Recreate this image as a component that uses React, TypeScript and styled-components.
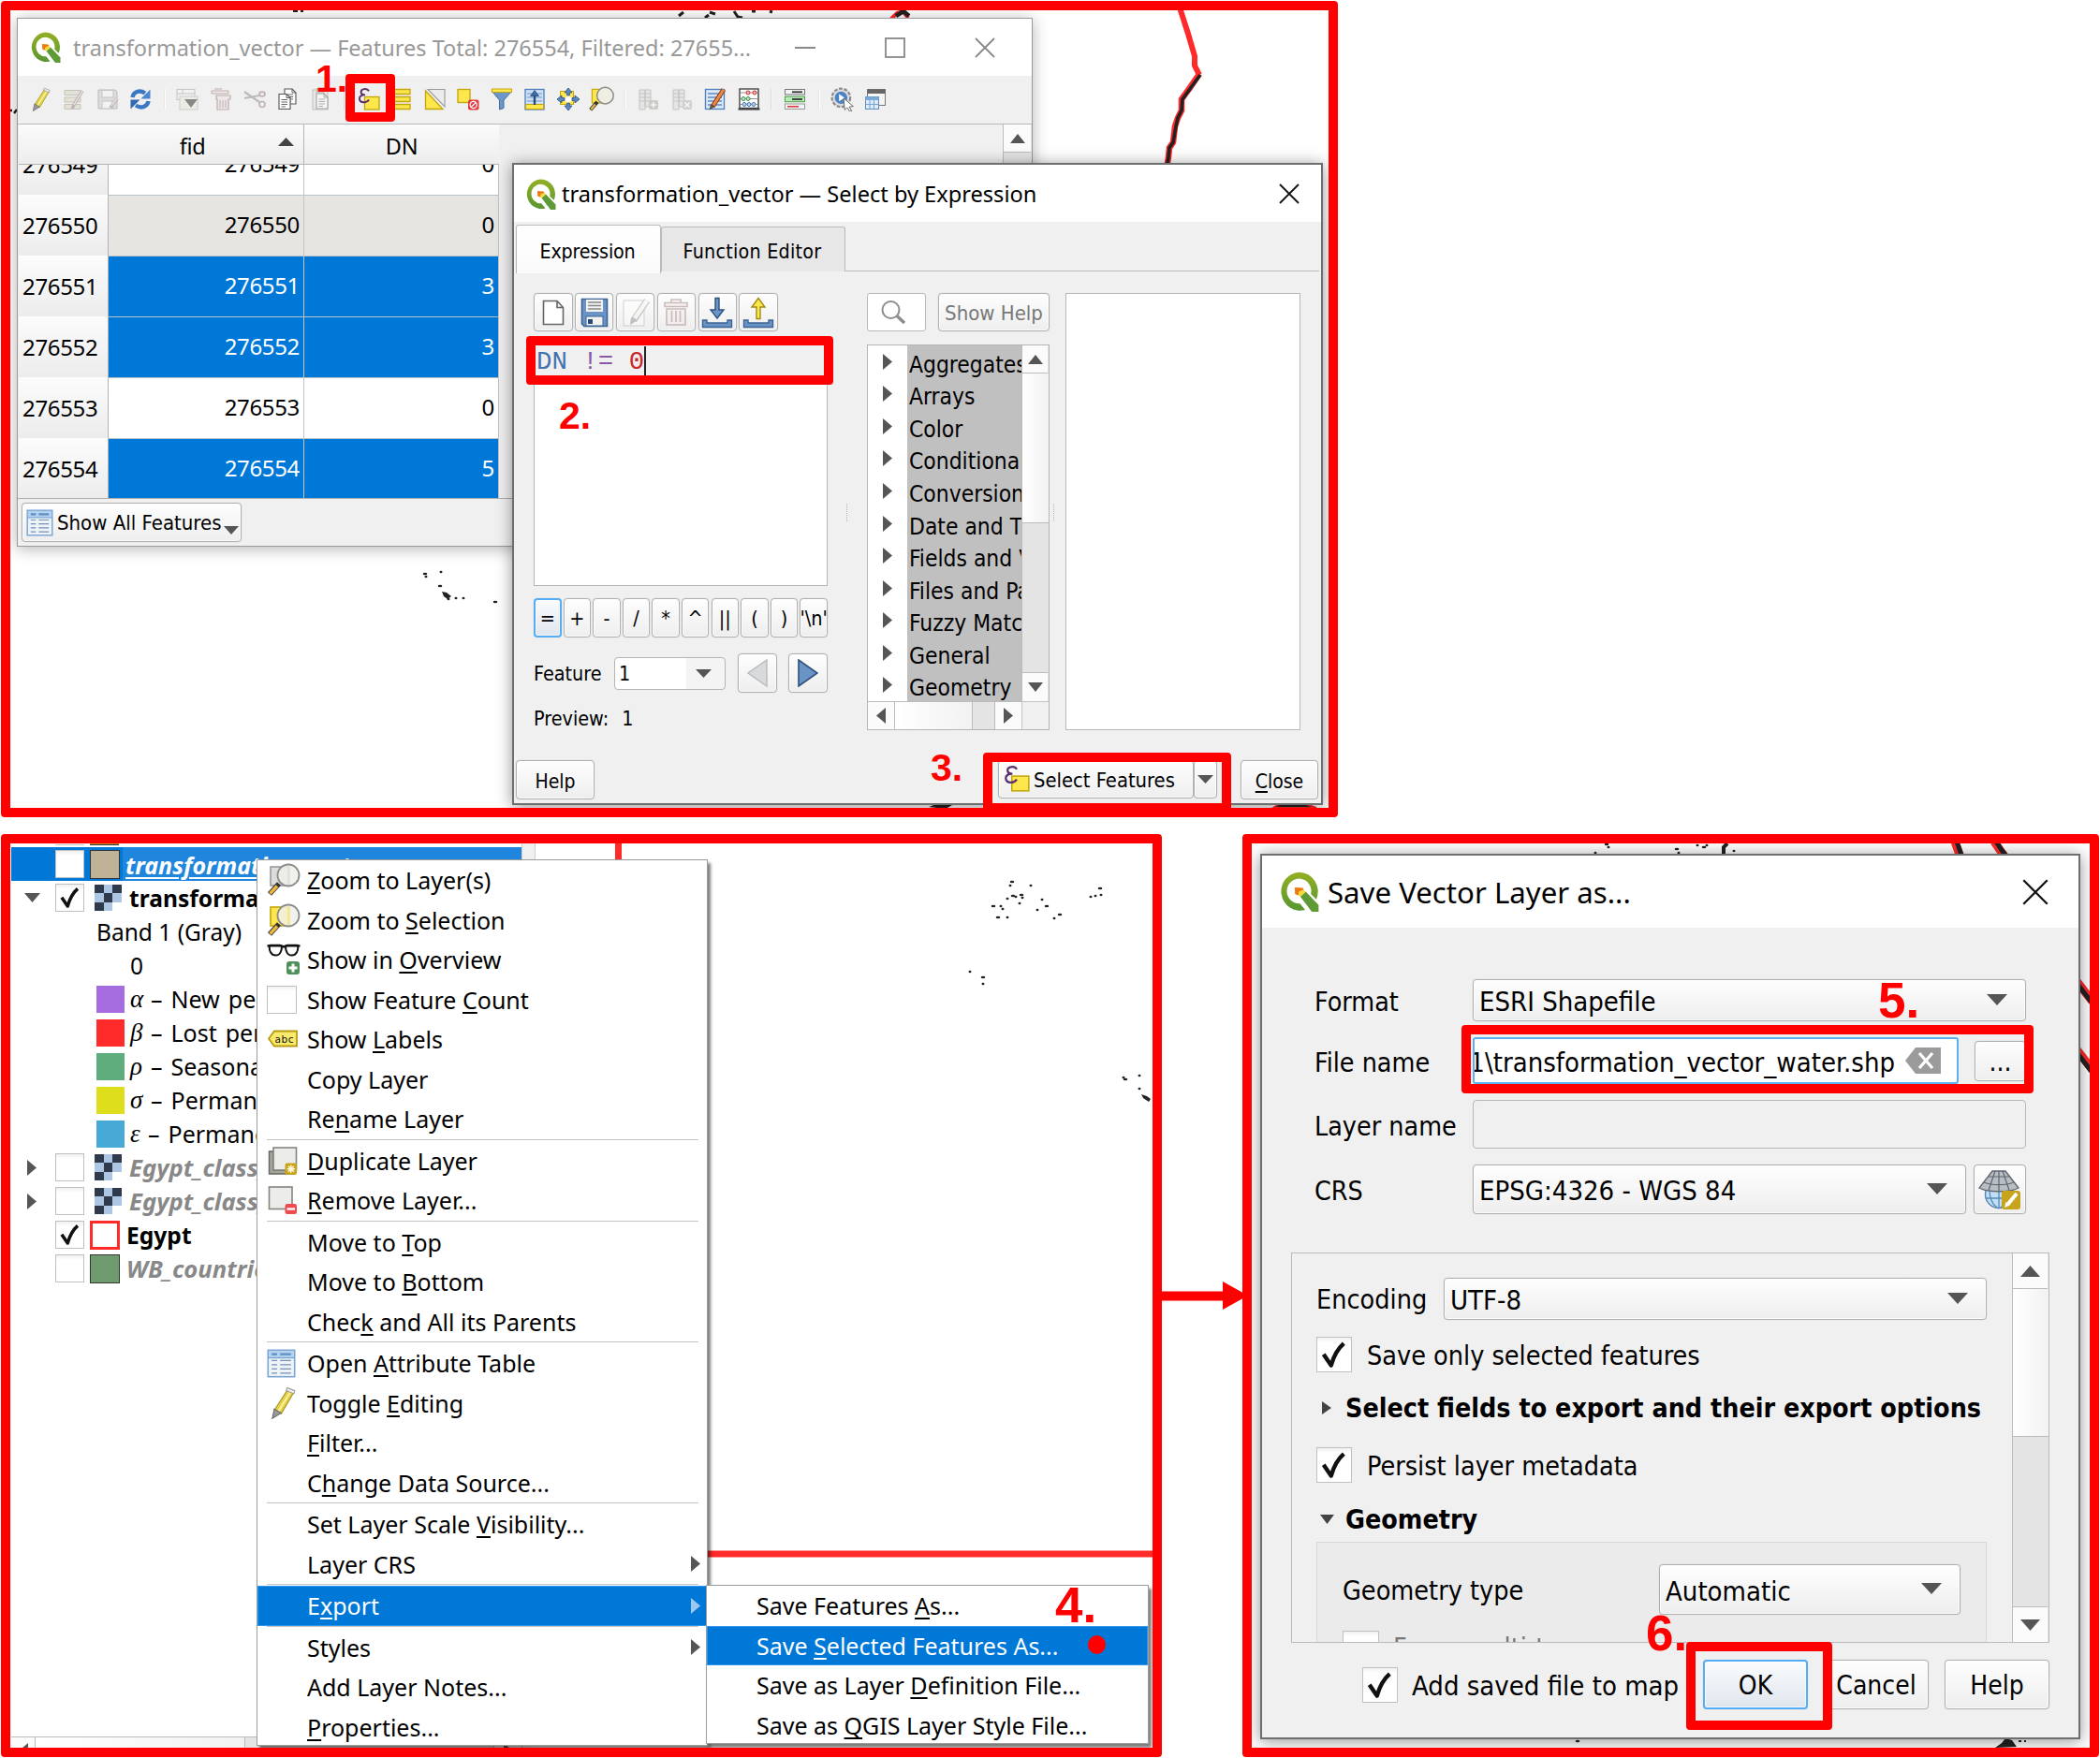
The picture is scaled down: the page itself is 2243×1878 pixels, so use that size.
import React from 'react';
import styled, { createGlobalStyle, css } from 'styled-components';

const RED = '#ff0000';
const UI = '"Noto Sans", "Open Sans", sans-serif';
const TAHOMA = '"DejaVu Sans Condensed", "DejaVu Sans", sans-serif';

const GlobalStyle = createGlobalStyle`
  * { box-sizing: border-box; }
  body { margin: 0; background: #fff; color: #000; font-family: ${UI}; }
  svg { display: block; flex: none; }
`;

/* ---------- page ---------- */

const Page = styled.main`
  width: 2243px;
  height: 1878px;
  padding: 1px;
  display: flex;
  flex-direction: column;
  gap: 18px;
  overflow: hidden;
`;

const LowerRow = styled.div`
  display: flex;
  align-items: stretch;
`;

const Panel = styled.section<{ $w: number; $h: number }>`
  position: relative;
  flex: none;
  width: ${(p) => p.$w}px;
  height: ${(p) => p.$h}px;
  border: 10px solid ${RED};
  border-radius: 4px;
  background: #fff;
`;

const Scene = styled.div`
  position: absolute;
  inset: 0;
  overflow: hidden;
`;

const MapSvg = styled.svg`
  position: absolute;
  inset: 0;
  width: 100%;
  height: 100%;
`;

const Connector = styled.div`
  width: 86px;
  padding-top: 478px;
  position: relative;
  z-index: 2;
  svg { overflow: visible; }
`;

const CalloutBox = styled.div<{ $x: number; $y: number; $w: number; $h: number }>`
  position: absolute;
  left: ${(p) => p.$x}px;
  top: ${(p) => p.$y}px;
  width: ${(p) => p.$w}px;
  height: ${(p) => p.$h}px;
  border: 10px solid ${RED};
  border-radius: 4px;
`;

const StepNumber = styled.span<{ $x: number; $y: number; $size: number }>`
  position: absolute;
  left: ${(p) => p.$x}px;
  top: ${(p) => p.$y}px;
  font: bold ${(p) => p.$size}px/1 "Liberation Sans", Arial, sans-serif;
  color: ${RED};
`;

const StepDot = styled.span`
  position: absolute;
  left: 1151px;
  top: 846px;
  width: 19px;
  height: 20px;
  border-radius: 50%;
  background: ${RED};
`;

/* ---------- window chrome ---------- */

const Window = styled.div<{ $x: number; $y: number; $w: number; $h: number; $active?: boolean }>`
  position: absolute;
  left: ${(p) => p.$x}px;
  top: ${(p) => p.$y}px;
  width: ${(p) => p.$w}px;
  height: ${(p) => p.$h}px;
  display: flex;
  flex-direction: column;
  background: #f0f0f0;
  border: ${(p) => (p.$active ? '2px solid #6c6e70' : '1px solid #9a9a9a')};
  box-shadow: 0 2px 16px rgba(0, 0, 0, ${(p) => (p.$active ? 0.42 : 0.3)});
`;

const TitleBar = styled.header<{ $h: number; $size: number; $pad: string; $gap: number; $muted?: boolean }>`
  flex: none;
  height: ${(p) => p.$h}px;
  padding: ${(p) => p.$pad};
  display: flex;
  align-items: center;
  gap: ${(p) => p.$gap}px;
  background: #fff;
  font-size: ${(p) => p.$size}px;
  white-space: nowrap;
  color: ${(p) => (p.$muted ? '#999' : '#000')};
`;

const WindowControls = styled.div<{ $gap: number }>`
  margin-left: auto;
  display: flex;
  align-items: center;
  gap: ${(p) => p.$gap}px;
`;

const raised = css`
  border: 1px solid #b0b0b0;
  border-radius: 4px;
  background: linear-gradient(#fefefe, #eeeeee);
  box-shadow: inset 0 0 0 1px rgba(255, 255, 255, 0.7), 0 0 1px #bbb;
`;

const Button = styled.button<{ $w: number; $h: number; $size?: number; $focus?: boolean; $muted?: boolean; $drop?: number }>`
  ${raised}
  flex: none;
  width: ${(p) => p.$w}px;
  height: ${(p) => p.$h}px;
  padding: ${(p) => p.$drop ?? 0}px 0 0;
  display: flex;
  align-items: center;
  justify-content: center;
  font: ${(p) => p.$size ?? 21}px ${TAHOMA};
  white-space: nowrap;
  color: ${(p) => (p.$muted ? '#787878' : '#000')};
  ${(p) => p.$focus && css`
    border: 2px solid #55aef5;
    background: linear-gradient(#fafcfe, #e0e6ed);
  `}
`;

const ScrollButton = styled.div<{ $w: number; $h: number; $edge?: string }>`
  flex: none;
  width: ${(p) => p.$w}px;
  height: ${(p) => p.$h}px;
  display: flex;
  align-items: center;
  justify-content: center;
  background: #fbfbfb;
  border: 0 solid #bcbcbc;
  ${(p) => p.$edge && `border-${p.$edge}-width: 1px;`}
`;

const ScrollThumb = styled.div<{ $w: number; $h: number; $edge: string }>`
  flex: none;
  width: ${(p) => p.$w}px;
  height: ${(p) => p.$h}px;
  background: linear-gradient(90deg, #fff, #f2f2f2);
  border: 0 solid #bcbcbc;
  border-${(p) => p.$edge}-width: 1px;
`;

const CheckBoxFrame = styled.span<{ $w: number; $h: number }>`
  flex: none;
  width: ${(p) => p.$w}px;
  height: ${(p) => p.$h}px;
  display: flex;
  align-items: center;
  justify-content: center;
  border: 1.5px solid #c0c0c0;
  background: linear-gradient(#f0f0f0, #fff 5px);
`;

/* ---------- small drawings ---------- */

type Dir = 'up' | 'down' | 'left' | 'right';
const triPoints: Record<Dir, string> = {
  up: '0,10 5,0 10,10',
  down: '0,0 10,0 5,10',
  left: '10,0 10,10 0,5',
  right: '0,0 10,5 0,10',
};
const Triangle = ({ dir, w, h, fill = '#555' }: { dir: Dir; w: number; h: number; fill?: string }) => (
  <svg width={w} height={h} viewBox="0 0 10 10" preserveAspectRatio="none">
    <polygon points={triPoints[dir]} fill={fill} />
  </svg>
);

const Tick = ({ size }: { size: number }) => (
  <svg width={size} height={size} viewBox="0 0 24 24" fill="none" stroke="#111">
    <path d="M3 12 L9.5 21.5 Q13 9 20.5 2.5" strokeWidth="3.6" strokeLinejoin="round" />
  </svg>
);

const CheckBox = ({ checked, w = 31, h = 30 }: { checked?: boolean; w?: number; h?: number }) => (
  <CheckBoxFrame $w={w} $h={h}>{checked && <Tick size={h * 0.78} />}</CheckBoxFrame>
);

const CloseGlyph = ({ size, color }: { size: number; color: string }) => (
  <svg width={size} height={size} viewBox="0 0 22 22" stroke={color} strokeWidth="1.8">
    <path d="M1 1 L21 21 M21 1 L1 21" />
  </svg>
);

const QgisLogo = ({ size }: { size: number }) => (
  <svg width={size} height={size} viewBox="0 0 33 33">
    <defs>
      <linearGradient id="qring" x1="0" y1="0" x2="0" y2="1">
        <stop offset="0" stopColor="#93b023" />
        <stop offset="1" stopColor="#589632" />
      </linearGradient>
    </defs>
    <path
      d="M16.5 0.5 A15.5 15.8 0 1 0 21.5 31.5 L17.3 26.2 A10 10.2 0 1 1 26.2 18.5 L30.6 22.8 A15.8 15.8 0 0 0 16.5 0.5 Z"
      fill="url(#qring)"
    />
    <polygon points="17.5,20.5 22,16.5 32.5,27.5 32.5,33 27,33" fill="#5e9a35" />
    <polygon points="15.2,15.5 19.2,15.5 22,16.5 17.5,20.5 15.2,19" fill="#f3dd3c" />
    <polygon points="13,13 19.5,13.4 20.5,15.2 15.6,19.6 13.2,18.5" fill="#ee7913" />
    <polygon points="16.5,16.4 20,15 22,16.6 17.6,20.5 15.8,18.5" fill="#f4d93c" />
  </svg>
);

const Ic = ({ children, faded, size = 24 }: { children: React.ReactNode; faded?: boolean; size?: number }) => (
  <svg width={size} height={size} viewBox="0 0 24 24" fill="none" opacity={faded ? 0.5 : 1}>
    {children}
  </svg>
);

const Pencil = ({ size = 26 }: { size?: number }) => (
  <Ic size={size}>
    <polygon points="15.5,2 20,4 10.5,20 5.5,17.5" fill="#e5d34b" stroke="#a79626" strokeWidth=".8" />
    <path d="M17.7 3.5 L8 19" stroke="#fbf3a0" strokeWidth="1.3" />
    <polygon points="15,1 20.5,3.2 19.8,5.4 14.2,3" fill="#eee" stroke="#999" strokeWidth=".7" />
    <polygon points="5.5,16.5 10.4,19.6 4,23.5" fill="#999" stroke="#666" strokeWidth=".7" />
  </Ic>
);

const TableIcon = ({ size }: { size: number }) => (
  <Ic size={size}>
    <rect x="1" y="1" width="22" height="22" fill="#eef3f8" stroke="#7ba4d4" strokeWidth="1.2" />
    <rect x="1.6" y="1.6" width="20.8" height="5.6" fill="#b3d2ee" />
    <path d="M1 7.4H23" stroke="#7ba4d4" />
    <path d="M4 4.4H8.5 M11 4.4H20" stroke="#5e8ec4" strokeWidth="1.8" />
    <path d="M4 9.5H8.5M11 9.5H20M4 13H8.5M11 13H20M4 16.5H8.5M11 16.5H20M4 20H8.5M11 20H20" stroke="#7590b8" />
  </Ic>
);

const EpsilonIcon = ({ size }: { size: number }) => (
  <Ic size={size}>
    <rect x="7.5" y="9.5" width="15.5" height="13.5" fill="#fde74c" stroke="#c4a50a" strokeWidth="1.3" />
    <path
      d="M12 3.2 C10 -.2 3.4 .6 3.6 4.4 C3.7 6.8 6 7.4 8 7.4 C4 7.4 1.6 9 2 12 C2.6 16.2 9.6 16.4 12 12.6"
      stroke="#5b2d6b"
      strokeWidth="1.9"
    />
  </Ic>
);

const ZoomIcon = ({ fill, edge }: { fill: string; edge: string }) => (
  <svg width="36" height="36" viewBox="0 0 36 36" fill="none">
    <rect x="4" y="4" width="20" height="20" fill={fill} stroke={edge} strokeWidth="1.6" />
    <path d="M3 33 L13 22" stroke="#333" strokeWidth="5.5" />
    <path d="M3.5 32.5 L11 24.5" stroke="#eeb842" strokeWidth="3.4" />
    <circle cx="23" cy="13" r="11.5" fill="#f0f0ea" fillOpacity=".85" stroke="#8b8b8b" strokeWidth="1.8" />
    <path d="M23 4v18" stroke={fill} strokeWidth="2" opacity=".7" />
  </svg>
);

const Magnifier = () => (
  <svg width="27" height="27" viewBox="0 0 27 27" fill="none" stroke="#8d8d8d">
    <circle cx="10.5" cy="11" r="9" strokeWidth="2" />
    <path d="M17 17.5 L25 25" strokeWidth="3.4" />
  </svg>
);

/* ---------- attribute table window ---------- */

const Toolbar = styled.div`
  flex: none;
  height: 52px;
  padding: 0 0 2px 7px;
  display: flex;
  align-items: center;
  border-bottom: 1px solid #b9b9b9;
`;

const ToolSlot = styled.span`
  width: 35.55px;
  display: flex;
  align-items: center;
  justify-content: center;
`;

const ToolSeparator = styled.i<{ $w: number }>`
  width: ${(p) => p.$w}px;
  height: 22px;
  background: linear-gradient(90deg, transparent calc(50% - 1px), #d2d2d2 calc(50% - 1px), #fff calc(50% + 1px), transparent calc(50% + 1px));
`;

const TableArea = styled.div`
  flex: none;
  height: 400px;
  padding-left: 1px;
  display: flex;
  border-bottom: 1px solid #b0b0b0;
  overflow: hidden;
`;

const Grid = styled.div`
  width: 513px;
  display: flex;
  flex-direction: column;
  overflow: hidden;
  font-size: 24px;
  letter-spacing: -0.35px;
`;

const GridHeader = styled.div`
  flex: none;
  height: 43px;
  display: flex;
  position: relative;
  z-index: 1;
  background: linear-gradient(#fbfbfb, #f0f0f0 80%, #ececec);
  border-bottom: 1.5px solid #b5b5b5;
  font-size: 23.5px;
`;

const ColumnTitle = styled.div<{ $w: number; $pad?: number; $divider?: boolean }>`
  width: ${(p) => p.$w}px;
  padding: 4px 10px 0 ${(p) => p.$pad ?? 10}px;
  display: flex;
  align-items: center;
  justify-content: center;
  border-right: ${(p) => (p.$divider ? '1px solid #b5b5b5' : '0')};
`;

const SortMark = styled.span`
  position: absolute;
  left: 277px;
  top: 14px;
`;

const GridRows = styled.div`
  margin-top: -33px;
`;

const GridRow = styled.div<{ $bg: string; $fg: string }>`
  height: 65px;
  display: grid;
  grid-template-columns: 96px 209px 208px;
  line-height: 64px;
  background: ${(p) => p.$bg};
  color: ${(p) => p.$fg};
`;

const RowHead = styled.div`
  padding: 1px 0 0 4px;
  color: #000;
  background: linear-gradient(#fcfcfc, #ececec);
  border-right: 1px solid #b5b5b5;
  border-bottom: 1px solid #b5b5b5;
`;

const Cell = styled.div`
  padding-right: 4px;
  text-align: right;
  border-right: 1px solid #c4c4c4;
  border-bottom: 1px solid #b9c3ca;
`;

const TableScroll = styled.div`
  width: 31px;
  margin-left: auto;
  display: flex;
  flex-direction: column;
  border-left: 1px solid #bcbcbc;
  background: #e4e4e4;
`;

const BottomBar = styled.div`
  flex: 1;
  padding: 4px 0 0 4px;
`;

const FilterButton = styled.button`
  ${raised}
  width: 235px;
  height: 42px;
  padding: 0 3px 0 4px;
  display: flex;
  align-items: center;
  gap: 4px;
  font: 22px ${TAHOMA};
  white-space: nowrap;
  svg:last-child { margin: 17px 0 0 -1px; }
`;

const Save = () => (
  <>
    <path d="M2 2H20L22 4V22H2Z" fill="#c9ccd0" stroke="#888" />
    <rect x="6" y="2.5" width="12" height="7.5" fill="#f4f4f4" stroke="#999" />
    <rect x="6" y="14" width="11" height="8" fill="#f4f4f4" stroke="#999" />
  </>
);
const Sheet = ({ x, y }: { x: number; y: number }) => (
  <g transform={`translate(${x} ${y})`}>
    <path d="M0 0H8L12 4V16H0Z" fill="#fff" stroke="#555" strokeWidth="1.1" />
    <path d="M8 0V4H12M2.5 6H9M2.5 8.5H9M2.5 11H9M2.5 13.5H7" stroke="#555" strokeWidth=".9" />
  </g>
);

const tools: (React.ReactNode | number)[] = [
  <Pencil key="edit" />,
  <Ic key="multi" faded>
    <path d="M2 2.5H19V7.5H2ZM2 10H19V15H2ZM2 17.5H19V22.5H2Z" fill="#d5d5c4" stroke="#9a9a80" />
    <path d="M21 3 L12 18 L10 22" stroke="#8d7777" strokeWidth="3.4" />
    <path d="M21 3 L12 18" stroke="#e8dada" strokeWidth="1.4" />
  </Ic>,
  <Ic key="save" faded><Save /><path d="M22 11 L15 21" stroke="#9a7b7b" strokeWidth="3.4" /><path d="M22 11 L16 19" stroke="#e6d6d6" strokeWidth="1.4" /></Ic>,
  <Ic key="reload">
    <path d="M3.5 10 C4.5 4 11 1.5 17 5.5" stroke="#3b78c4" strokeWidth="4.4" />
    <path d="M22.5 1.5V11.5H12.5Z" fill="#4a86cf" />
    <path d="M20.5 14 C19.5 20 13 22.5 7 18.5" stroke="#3b78c4" strokeWidth="4.4" />
    <path d="M1.5 22.5V12.5H11.5Z" fill="#3368b0" />
  </Ic>,
  14.5,
  <Ic key="add" faded>
    <rect x="1" y="1.5" width="19" height="11" fill="#f3f3f3" stroke="#999" />
    <path d="M1 6H20M7 1.5V6" stroke="#999" />
    <rect x="4" y="9" width="19" height="14" fill="#eceada" stroke="#aaa" />
    <polygon points="9,12 23,12 16,21" fill="#222" />
  </Ic>,
  <Ic key="trash" faded>
    <path d="M2 3H20V6H2ZM5 1H13" stroke="#8f6a6a" fill="#f0e6e6" />
    <path d="M7 8H22V12H20V23H8V12H7Z" fill="#ecdfdf" stroke="#8f6a6a" strokeWidth="1.2" />
    <path d="M11 13V21M14 13V21M17 13V21" stroke="#8f6a6a" />
  </Ic>,
  <Ic key="cut" faded>
    <path d="M1 4 L17 15 M1 11 L17 8" stroke="#8f8585" strokeWidth="2.2" />
    <ellipse cx="20" cy="6.5" rx="3" ry="2.4" stroke="#8f7575" strokeWidth="1.6" />
    <ellipse cx="20" cy="17.5" rx="3" ry="3" stroke="#8f7575" strokeWidth="1.6" />
  </Ic>,
  <Ic key="copy"><Sheet x={9} y={1} /><Sheet x={3} y={6.5} /></Ic>,
  <Ic key="paste" faded><rect x="3" y="2" width="16" height="21" fill="#e6e2da" stroke="#8d8d8d" /><rect x="7" y="0.8" width="8" height="4" fill="#ccc" stroke="#888" /><Sheet x={7} y={6} /></Ic>,
  15.5,
  <EpsilonIcon key="expr" size={24} />,
  <Ic key="all">
    <path d="M1 1.5H21V6.5H1ZM1 9.5H21V14.5H1ZM1 17.5H21V22.5H1Z" fill="#fde74c" stroke="#c4a50a" strokeWidth="1.3" />
  </Ic>,
  <Ic key="invert">
    <polygon points="4,1.5 22,1.5 22,20" fill="#ececec" stroke="#999" strokeWidth="1.1" />
    <polygon points="1.5,3 20,22.5 1.5,22.5" fill="#fde74c" stroke="#c4a50a" strokeWidth="1.3" />
  </Ic>,
  <Ic key="desel">
    <rect x="1" y="1.5" width="13" height="14" fill="#fde74c" stroke="#c4a50a" strokeWidth="1.3" />
    <rect x="12" y="12.5" width="11.5" height="11" rx="2" fill="#e23b3f" />
    <circle cx="17.7" cy="18" r="3.6" stroke="#fff" strokeWidth="1.2" /><path d="M15 20.5L20.3 15.5" stroke="#fff" strokeWidth="1.2" />
  </Ic>,
  <Ic key="filter">
    <path d="M2 4 L9.5 13 V23 L14 21.5 V13 L22 4Z" fill="#6b97cb" stroke="#44699a" />
    <rect x="1.5" y="1" width="21" height="3.6" fill="#fde74c" stroke="#c4a50a" />
  </Ic>,
  <Ic key="top">
    <rect x="2" y="1.5" width="20" height="21.5" fill="#cfe2f5" stroke="#4e7dbb" strokeWidth="1.3" />
    <path d="M4 6H20M4 10H20M4 14H20" stroke="#6d95c8" />
    <rect x="2.6" y="17.5" width="19" height="5" fill="#fde74c" stroke="#c4a50a" />
    <path d="M12 18V7" stroke="#274a7b" strokeWidth="2.4" /><polygon points="7.5,8.5 16.5,8.5 12,2.5" fill="#3f6ca8" stroke="#274a7b" strokeWidth=".8" />
  </Ic>,
  <Ic key="pan">
    <rect x="3.5" y="3.5" width="14" height="14" fill="#fde74c" stroke="#c4a50a" />
    <path d="M12 4V20M4 12H20" stroke="#fff" strokeWidth="3.5" />
    <path d="M12 0L16 5H13.4V8H10.6V5H8ZM12 24L16 19H13.4V16H10.6V19H8ZM0 12L5 8V10.6H8V13.4H5V16ZM24 12L19 8V10.6H16V13.4H19V16Z" fill="#5b88c4" stroke="#2c4c7c" strokeWidth=".8" />
  </Ic>,
  <Ic key="zoomsel" size={27}>
    <rect x="3" y="3" width="12" height="13" fill="#fde74c" stroke="#c4a50a" />
    <path d="M1.5 22.5 L8 15" stroke="#333" strokeWidth="3.4" /><path d="M2 22 L6 17.3" stroke="#eeb842" strokeWidth="2" />
    <circle cx="15.5" cy="9" r="7.8" fill="#eeeee2" stroke="#8b8b8b" strokeWidth="1.3" />
  </Ic>,
  15,
  <Ic key="newf" faded>
    <path d="M2 2H8V23H2ZM8 2H14V20H8Z" fill="#dcdcdc" stroke="#999" /><path d="M2 6H14M2 10H14M2 14H14" stroke="#999" />
    <rect x="12" y="13" width="10" height="10" rx="2" fill="#a8a8a0" /><path d="M17 15V21M14 18H20" stroke="#fff" strokeWidth="1.5" />
  </Ic>,
  <Ic key="delf" faded>
    <path d="M2 2H8V23H2ZM8 2H14V20H8Z" fill="#dcdcdc" stroke="#999" /><path d="M2 6H14M2 10H14M2 14H14" stroke="#999" />
    <rect x="12" y="13" width="10" height="10" rx="2" fill="#b8b0b0" /><path d="M14.5 15.5L19.5 20.5M19.5 15.5L14.5 20.5" stroke="#fff" strokeWidth="1.5" />
  </Ic>,
  <Ic key="orgf">
    <rect x="1.5" y="1.5" width="20" height="21" fill="#dbe9f7" stroke="#4e7dbb" strokeWidth="1.3" />
    <path d="M4 6H19M4 10H19M4 14H19M4 18H19" stroke="#5f8ac2" strokeWidth="1.3" />
    <path d="M21 1.5 L9 20" stroke="#8a3d12" strokeWidth="5" /><path d="M21 1.5 L10 18.5" stroke="#ea8a45" strokeWidth="3" /><polygon points="5.5,23.5 7,17.5 11,20.5" fill="#555" />
  </Ic>,
  <Ic key="calc">
    <rect x="2" y="1" width="20" height="20.5" fill="#fff" stroke="#444" strokeWidth="1.4" />
    <path d="M0.5 22.5H23.5" stroke="#444" strokeWidth="2.2" /><path d="M2 5H22M2 11.5H22M2 17.5H22" stroke="#777" strokeWidth=".8" />
    <g stroke="#cf3434" fill="#f4b3b3"><circle cx="11" cy="5" r="2" /><circle cx="18" cy="5" r="2" /></g>
    <g stroke="#3b8c4b" fill="#b8e5c0"><circle cx="6" cy="11.5" r="2" /><circle cx="11" cy="11.5" r="2" /></g>
    <g stroke="#4474ad" fill="#bcd4ee"><circle cx="7" cy="17.5" r="2" /><circle cx="12" cy="17.5" r="2" /><circle cx="17" cy="17.5" r="2" /></g>
  </Ic>,
  14,
  <Ic key="cond">
    <rect x="1.5" y="1.5" width="21" height="5.5" fill="#f4f4f4" stroke="#777" /><path d="M9 4.3H20" stroke="#333" strokeWidth="1.8" />
    <rect x="1.5" y="9.2" width="21" height="5.5" fill="#b9ecb9" stroke="#4ca04c" /><path d="M9 12H20" stroke="#333" strokeWidth="1.8" />
    <rect x="1.5" y="17" width="21" height="5.5" fill="#f7f7f7" stroke="#999" /><path d="M4 19.8H16" stroke="#d83b3b" strokeWidth="1.6" />
  </Ic>,
  15,
  <Ic key="act" size={26}>
    <circle cx="10.5" cy="10.5" r="9" fill="#ddd" stroke="#8a8a8a" strokeWidth="2" strokeDasharray="3.5 1.5" />
    <circle cx="10.5" cy="10.5" r="6.2" fill="#4b82c3" /><polygon points="8.5,7 14,10.5 8.5,14" fill="#fff" />
    <polygon points="13,11 22.5,19 18.5,19.5 21,23.5 19,24 16.5,20.3 14,22.5" fill="#fff" stroke="#666" strokeWidth=".9" />
  </Ic>,
  <Ic key="dock">
    <rect x="3.5" y="1.5" width="19" height="17" fill="#f5f5f5" stroke="#777" /><rect x="3.5" y="1.5" width="19" height="4.5" fill="#666" />
    <rect x="1.5" y="9.5" width="14" height="13" fill="#dceafa" stroke="#5e8ec4" /><rect x="1.5" y="9.5" width="14" height="3.5" fill="#7ba9dc" />
    <path d="M6 13V22M10.5 13V22M2 17.5H15" stroke="#7ba4d4" />
  </Ic>,
];

const SEL = '#0078d7';
const features: [string, string, string, string][] = [
  ['276549', '0', '#fff', '#000'],
  ['276550', '0', '#e7e5e1', '#000'],
  ['276551', '3', SEL, '#fff'],
  ['276552', '3', SEL, '#fff'],
  ['276553', '0', '#fff', '#000'],
  ['276554', '5', SEL, '#fff'],
];

const AttributeTableWindow = () => (
  <Window $x={7} $y={8} $w={1085} $h={565}>
    <TitleBar $h={61} $size={23.5} $pad="0 39px 0 13px" $gap={13} $muted>
      <QgisLogo size={33} />
      <span>transformation_vector — Features Total: 276554, Filtered: 27655...</span>
      <WindowControls $gap={74}>
        <svg width="22" height="22" stroke="#888" strokeWidth="2"><path d="M0 11H22" /></svg>
        <svg width="22" height="22" stroke="#888" strokeWidth="1.8" fill="none"><rect x="1" y="1" width="20" height="20" /></svg>
        <CloseGlyph size={22} color="#888" />
      </WindowControls>
    </TitleBar>
    <Toolbar>
      {tools.map((t, i) => (typeof t === 'number' ? <ToolSeparator key={i} $w={t} /> : <ToolSlot key={i}>{t}</ToolSlot>))}
    </Toolbar>
    <TableArea>
      <Grid>
        <GridHeader>
          <ColumnTitle $w={305} $pad={77} $divider>fid</ColumnTitle>
          <ColumnTitle $w={208}>DN</ColumnTitle>
          <SortMark><Triangle dir="up" w={17} h={9} fill="#444" /></SortMark>
        </GridHeader>
        <GridRows>
          {features.map(([fid, dn, bg, fg]) => (
            <GridRow key={fid} $bg={bg} $fg={fg}>
              <RowHead>{fid}</RowHead>
              <Cell>{fid}</Cell>
              <Cell>{dn}</Cell>
            </GridRow>
          ))}
        </GridRows>
      </Grid>
      <TableScroll>
        <ScrollButton $w={29} $h={30} $edge="bottom"><Triangle dir="up" w={16} h={10} /></ScrollButton>
      </TableScroll>
    </TableArea>
    <BottomBar>
      <FilterButton>
        <TableIcon size={29} />
        Show All Features
        <Triangle dir="down" w={16} h={9} />
      </FilterButton>
    </BottomBar>
  </Window>
);

/* ---------- select by expression dialog ---------- */

const TabBar = styled.div`
  flex: none;
  height: 53px;
  padding: 0 2px;
  display: flex;
  align-items: flex-end;
  font: 21.3px ${TAHOMA};
`;

const Tab = styled.div<{ $w: number; $h: number; $active?: boolean }>`
  flex: none;
  width: ${(p) => p.$w}px;
  height: ${(p) => p.$h}px;
  padding: 3px 2px 0 0;
  margin-bottom: ${(p) => (p.$active ? -2 : 0)}px;
  display: flex;
  align-items: center;
  justify-content: center;
  letter-spacing: ${(p) => (p.$active ? -0.2 : 0.25)}px;
  border: 1px solid #bababa;
  border-bottom: 0;
  border-radius: 3px 3px 0 0;
  background: ${(p) => (p.$active ? 'linear-gradient(#fff, #fafafa)' : '#e7e7e7')};
`;

const TabRule = styled.i`
  flex: 1;
  border-bottom: 1.5px solid #bababa;
`;

const ExpressionBody = styled.div`
  flex: none;
  height: 522px;
  padding: 23px 21px 0 21px;
  display: grid;
  grid-template-columns: 314px 42px 195px 17px 251px;
`;

const Column = styled.div`
  display: flex;
  flex-direction: column;
`;

const ButtonStrip = styled.div<{ $gap: number; $mt?: number }>`
  display: flex;
  gap: ${(p) => p.$gap}px;
  margin-top: ${(p) => p.$mt ?? 0}px;
`;

const Editor = styled.div`
  height: 258px;
  margin-top: 14px;
  background: #fff;
  border: 1px solid #b5b5b5;
`;

const CodeLine = styled.div`
  height: 35px;
  padding-left: 2px;
  display: flex;
  align-items: center;
  background: #f0f0f0;
  font: 27.4px "Liberation Mono", monospace;
  white-space: pre;
`;

const Token = styled.span<{ $color: string }>`
  color: ${(p) => p.$color};
`;

const Caret = styled.i<{ $h: number }>`
  width: 1.5px;
  height: ${(p) => p.$h}px;
  background: #222;
`;

const FeatureRow = styled.div`
  margin-top: 17px;
  height: 42px;
  display: flex;
  align-items: center;
  font: 21.4px ${TAHOMA};
`;

const FeatureLabel = styled.span`
  width: 86px;
`;

const FeatureCombo = styled.div`
  width: 119px;
  height: 35px;
  margin-right: 13px;
  padding-left: 4px;
  display: flex;
  align-items: center;
  border: 1.5px solid #b5b5b5;
  border-radius: 4px;
  background: linear-gradient(90deg, #fff 65%, #f4f4f4 65%);
  svg { margin: 0 14px 0 auto; }
`;

const PreviewRow = styled.div`
  margin-top: 13px;
  display: flex;
  gap: 14px;
  font: 21.4px/30px ${TAHOMA};
`;

const Splitter = styled.div<{ $left: number }>`
  padding: 225px 0 0 ${(p) => p.$left}px;
  &::before {
    content: '';
    display: block;
    width: 0;
    height: 19px;
    border-left: 1.5px dotted #b5b5b5;
  }
`;

const SearchField = styled.div`
  width: 63px;
  height: 41px;
  padding-left: 14px;
  display: flex;
  align-items: center;
  background: #fff;
  border: 1.5px solid #b8b8b8;
  border-radius: 3px;
`;

const FunctionTree = styled.div`
  height: 412px;
  margin-top: 14px;
  display: grid;
  grid-template: 380px 30px / 164px 29px;
  background: #f0f0f0;
  border: 1px solid #b5b5b5;
`;

const TreeRows = styled.div`
  padding-top: 1px;
  background: linear-gradient(90deg, #fff 42px, #c0c0c0 42px);
  overflow: hidden;
`;

const TreeRow = styled.div`
  height: 34.55px;
  display: grid;
  grid-template-columns: 44px 1fr;
  align-items: center;
  font: 24.4px ${TAHOMA};
  white-space: nowrap;
  svg { margin-left: 16px; margin-top: -2px; }
`;

const TreeText = styled.span`
  padding-top: 4px;
`;

const VBar = styled.div`
  display: flex;
  flex-direction: column;
  background: #e4e4e4;
  border-left: 1px solid #bcbcbc;
`;

const HBar = styled.div`
  display: flex;
  background: #e4e4e4;
  border-top: 1px solid #bcbcbc;
`;

const Corner = styled.div`
  border: solid #c4c4c4;
  border-width: 1px 0 0 1px;
`;

const Push = styled.i`
  flex: 1;
`;

const HelpPane = styled.div`
  height: 467px;
  background: #fff;
  border: 1.5px solid #b8b8b8;
`;

const ExpressionFooter = styled.div`
  padding: 0 3px 0 2px;
  display: flex;
`;

const SplitButton = styled.div`
  display: flex;
  margin: 0 25px 0 auto;
`;

const SelectButton = styled.button`
  ${raised}
  width: 209px;
  height: 41px;
  padding: 2px 0 0 5px;
  display: flex;
  align-items: center;
  gap: 4px;
  font: 21.8px ${TAHOMA};
  white-space: nowrap;
  svg { margin-top: -3px; }
`;

const functionGroups = ['Aggregates', 'Arrays', 'Color', 'Conditionals', 'Conversions', 'Date and Time', 'Fields and Values', 'Files and Paths', 'Fuzzy Matching', 'General', 'Geometry'];
const operators = ['=', '+', '-', '/', '*', '^', '||', '(', ')', "'\\n'"];

const editorTools = [
  <svg key="n" width="24" height="28" viewBox="0 0 24 28"><path d="M1.5 1.5H16L22.5 8.5V26.5H1.5Z M16 1.5V8.5H22.5" fill="#fff" stroke="#666" strokeWidth="1.6" /></svg>,
  <svg key="s" width="30" height="32" viewBox="0 0 30 32">
    <path d="M1.5 1.5H28.5V30.5H4L1.5 28Z" fill="#6a94c6" stroke="#3d6494" strokeWidth="1.6" />
    <rect x="6" y="2" width="18" height="13" fill="#f2f2f2" /><path d="M8 5H22M8 8.5H22M8 12H22" stroke="#888" strokeWidth="1.4" />
    <rect x="6" y="20" width="18" height="10" fill="#f2f2f2" stroke="#3d6494" /><rect x="8" y="23" width="5" height="5" fill="#274a7b" />
  </svg>,
  <svg key="e" width="30" height="32" viewBox="0 0 30 32" opacity=".4"><path d="M2 3H24V30H2Z" fill="#fff" stroke="#999" /><path d="M27 3 L13 24" stroke="#888" strokeWidth="7" /><path d="M27 3 L14 22" stroke="#f4f4ea" strokeWidth="4.5" /><polygon points="9,29 10,21 16,25" fill="#777" /></svg>,
  <svg key="d" width="26" height="31" viewBox="0 0 26 31" opacity=".45" fill="none" stroke="#997272" strokeWidth="1.6"><path d="M1 5.5H25V9.5H1Z M8 5V2H18V5 M3 12H23V29H3Z M8.5 14V26M13 14V26M17.5 14V26" fill="#f3eaea" /></svg>,
  <svg key="i" width="34" height="34" viewBox="0 0 34 34"><path d="M1.5 25H6V28H28V25H32.5V32.5H1.5Z" fill="#6a94c6" stroke="#3d6494" strokeWidth="1.4" /><path d="M15 1.5H19V14H24L17 23L10 14H15Z" fill="#6a94c6" stroke="#2f507c" strokeWidth="1.4" /></svg>,
  <svg key="o" width="34" height="34" viewBox="0 0 34 34"><path d="M1.5 25H6V28H28V25H32.5V32.5H1.5Z" fill="#6a94c6" stroke="#3d6494" strokeWidth="1.4" /><path d="M15 23.5H19V11H24L17 1.5L10 11H15Z" fill="#fde74c" stroke="#a18a10" strokeWidth="1.4" /></svg>,
];

const ExpressionDialog = () => (
  <Window $x={536} $y={163} $w={866} $h={686} $active>
    <TitleBar $h={61} $size={23.6} $pad="1px 23px 0 12px" $gap={6}>
      <QgisLogo size={33} />
      <span>transformation_vector — Select by Expression</span>
      <WindowControls $gap={0}><CloseGlyph size={22} color="#111" /></WindowControls>
    </TitleBar>
    <TabBar>
      <Tab $w={155} $h={52} $active>Expression</Tab>
      <Tab $w={197} $h={48}>Function Editor</Tab>
      <TabRule />
    </TabBar>
    <ExpressionBody>
      <Column>
        <ButtonStrip $gap={2.4}>
          {editorTools.map((icon, i) => <Button key={i} $w={41.5} $h={41}>{icon}</Button>)}
        </ButtonStrip>
        <Editor>
          <CodeLine>
            <Token $color="#4271ae">DN </Token>
            <Token $color="#8959a8">!= </Token>
            <Token $color="#c82829">0</Token>
            <Caret $h={33} />
          </CodeLine>
        </Editor>
        <ButtonStrip $gap={2.1} $mt={13}>
          {operators.map((op, i) => <Button key={op} $w={29.5} $h={42} $size={21.5} $drop={1} $focus={i === 0}>{op}</Button>)}
        </ButtonStrip>
        <FeatureRow>
          <FeatureLabel>Feature</FeatureLabel>
          <FeatureCombo>1<Triangle dir="down" w={17} h={9} /></FeatureCombo>
          <ButtonStrip $gap={12}>
            <Button $w={42} $h={42}>
              <svg width="22" height="30" viewBox="0 0 22 30"><polygon points="21,1 21,29 1,15" fill="#d8dadc" stroke="#b9bcc0" strokeWidth="1.5" /></svg>
            </Button>
            <Button $w={42} $h={42}>
              <svg width="22" height="30" viewBox="0 0 22 30"><polygon points="1,1 1,29 21,15" fill="#6a94c6" stroke="#2f507c" strokeWidth="1.6" /></svg>
            </Button>
          </ButtonStrip>
        </FeatureRow>
        <PreviewRow><span>Preview:</span><span>1</span></PreviewRow>
      </Column>
      <Splitter $left={20} />
      <Column>
        <ButtonStrip $gap={13}>
          <SearchField><Magnifier /></SearchField>
          <Button $w={119} $h={41} $size={22} $drop={2} $muted>Show Help</Button>
        </ButtonStrip>
        <FunctionTree>
          <TreeRows>
            {functionGroups.map((g) => <TreeRow key={g}><Triangle dir="right" w={10} h={17} /><TreeText>{g}</TreeText></TreeRow>)}
          </TreeRows>
          <VBar>
            <ScrollButton $w={27} $h={30} $edge="bottom"><Triangle dir="up" w={16} h={10} /></ScrollButton>
            <ScrollThumb $w={28} $h={160} $edge="bottom" />
            <Push />
            <ScrollButton $w={27} $h={31} $edge="top"><Triangle dir="down" w={16} h={10} /></ScrollButton>
          </VBar>
          <HBar>
            <ScrollButton $w={29} $h={29} $edge="right"><Triangle dir="left" w={10} h={17} /></ScrollButton>
            <ScrollThumb $w={83} $h={29} $edge="right" />
            <Push />
            <ScrollButton $w={29} $h={29} $edge="left"><Triangle dir="right" w={10} h={17} /></ScrollButton>
          </HBar>
          <Corner />
        </FunctionTree>
      </Column>
      <Splitter $left={4} />
      <HelpPane />
    </ExpressionBody>
    <ExpressionFooter>
      <Button $w={84} $h={42} $drop={3}>Help</Button>
      <SplitButton>
        <SelectButton><EpsilonIcon size={28} />Select Features</SelectButton>
        <Button $w={25} $h={41}><Triangle dir="down" w={17} h={9} /></Button>
      </SplitButton>
      <Button $w={83} $h={42} $drop={3}><span><Mnemonic text="&Close" /></span></Button>
    </ExpressionFooter>
  </Window>
);

/* ---------- layers panel and context menu ---------- */

const Accel = styled.u`
  text-underline-offset: 3px;
  text-decoration-thickness: 1.5px;
  text-decoration-skip-ink: none;
`;

function Mnemonic({ text }: { text: string }) {
  const i = text.indexOf('&');
  if (i < 0) return <>{text}</>;
  return <>{text.slice(0, i)}<Accel>{text[i + 1]}</Accel>{text.slice(i + 2)}</>;
}

const LayerPanel = styled.div`
  position: relative;
  width: 561px;
  height: 966px;
  padding-left: 1px;
  display: flex;
  flex-direction: column;
  font-size: 25px;
`;

const CutRow = styled.div`
  height: 4px;
  padding-left: 47px;
  display: flex;
  align-items: flex-start;
  gap: 6px;
`;

const CutBox = styled.i<{ $fill: string; $edge: string }>`
  width: 31px;
  height: 2px;
  background: ${(p) => p.$fill};
  border-bottom: 1px solid ${(p) => p.$edge};
`;

const LayerRow = styled.div<{ $selected?: boolean }>`
  width: 545px;
  height: 36px;
  display: flex;
  align-items: center;
  white-space: nowrap;
  background: ${(p) => (p.$selected ? 'linear-gradient(90deg, #0078d7 119px, #1f85dd 119px)' : 'none')};
`;

const Expander = styled.span<{ $pad?: number }>`
  width: 47px;
  padding-left: ${(p) => p.$pad ?? 14}px;
`;

const Badge = styled.span<{ $pad: number; $w: number }>`
  width: ${(p) => p.$w}px;
  padding-left: ${(p) => p.$pad}px;
`;

const Swatch = styled.i<{ $fill: string; $border: string; $w?: number }>`
  display: block;
  width: ${(p) => p.$w ?? 32}px;
  height: ${(p) => (p.$w ? 29 : 31)}px;
  background: ${(p) => p.$fill};
  border: ${(p) => p.$border};
`;

const LayerName = styled.span<{ $tone: 'selected' | 'on' | 'off' }>`
  padding-top: 1px;
  font-weight: bold;
  ${(p) => p.$tone === 'selected' && css`padding-top: 2px; color: #fff; font-style: italic; text-decoration: underline; text-underline-offset: 3px;`}
  ${(p) => p.$tone === 'off' && css`color: #888; font-style: italic; font-size: 25.6px;`}
  ${(p) => p.$tone === 'on' && css`font-size: 24.6px;`}
`;

const LegendText = styled.div<{ $left: number }>`
  height: 36px;
  line-height: 38px;
  padding-left: ${(p) => p.$left}px;
  font-size: 24.5px;
`;

const LegendRow = styled.div`
  height: 36px;
  padding-left: 91px;
  display: flex;
  align-items: center;
  gap: 6px;
  white-space: pre;
`;

const Greek = styled.em<{ $w: number }>`
  width: ${(p) => p.$w}px;
  font-family: "Liberation Serif", "DejaVu Serif", serif;
  font-size: 27px;
`;

const LegendName = styled.span`
  word-spacing: 2.5px;
`;

const RasterIcon = () => (
  <svg width="29" height="28" viewBox="0 0 3 3" preserveAspectRatio="none" shapeRendering="crispEdges">
    <rect width="3" height="3" fill="#acc6e3" />
    <path d="M0 0h1v1H0zM2 0h1v1H2zM1 1h1v1H1zM0 2h1v1H0z" fill="#2f3b4c" />
    <path d="M2 2h1v1H2z" fill="#fff" />
  </svg>
);

const ScrollGutter = styled.div`
  position: absolute;
  left: 546px;
  top: 0;
  width: 15px;
  height: 954px;
  background: #f0f0f0;
  border: solid #d0d0d0;
  border-width: 0 1px;
`;

const LayerHScroll = styled.div`
  margin-top: auto;
  width: 560px;
  height: 12px;
  display: flex;
  overflow: hidden;
  background: #e4e4e4;
  border-top: 1px solid #bcbcbc;
`;

const PopupMenu = styled.div<{ $x: number; $y: number; $w: number; $h: number }>`
  position: absolute;
  left: ${(p) => p.$x}px;
  top: ${(p) => p.$y}px;
  width: ${(p) => p.$w}px;
  height: ${(p) => p.$h}px;
  background: #fff;
  border: 1px solid #9c9c9c;
  box-shadow: 3px 4px 3px rgba(0, 0, 0, 0.5);
  overflow: hidden;
  font-size: 25px;
`;

const MenuRow = styled.div<{ $active?: boolean; $sub?: boolean }>`
  height: 42.5px;
  padding: 0 ${(p) => (p.$sub ? 0 : 7)}px 0 ${(p) => (p.$sub ? 53 : 9)}px;
  display: flex;
  align-items: center;
  white-space: nowrap;
  ${(p) => p.$active && css`color: #fff; background: ${SEL}; box-shadow: inset 0 0 0 1px #2f97ee;`}
  & > svg:last-child { margin-left: auto; }
`;

const MenuIcon = styled.span`
  width: 44px;
  padding-left: 1px;
`;

const MenuSeparator = styled.hr`
  height: 2px;
  margin: 0 9px 0 10px;
  border: 0;
  border-top: 1px solid #c4c4c4;
`;

const GlassesIcon = () => (
  <svg width="36" height="34" viewBox="0 0 36 34" fill="none">
    <path d="M0.5 2.6 L4 2 H14 L18 3.4 L22 2 H32 L35.5 2.6" stroke="#111" strokeWidth="2.4" />
    <path d="M3 2.5 H15.5 C16.6 6 14.5 12.6 9.5 12.6 C4.5 12.6 2 7 3 2.5 Z M33 2.5 H20.5 C19.4 6 21.5 12.6 26.5 12.6 C31.5 12.6 34 7 33 2.5 Z" fill="#fff" stroke="#111" strokeWidth="2" />
    <rect x="21" y="19" width="14" height="14" rx="3" fill="#4f8f58" />
    <path d="M28 21.5V30.5M23.5 26H32.5" stroke="#fff" strokeWidth="3" />
  </svg>
);

const TagIcon = () => (
  <svg width="34" height="20" viewBox="0 0 34 20">
    <path d="M2 9.5 L8 1.5 H32 V17.5 H8 Z" fill="#f9ea6b" stroke="#b99b12" strokeWidth="1.8" />
    <text x="8.5" y="13.5" fontFamily="DejaVu Sans" fontSize="10.5" fill="#111" textLength="20">abc</text>
  </svg>
);

const DuplicateIcon = () => (
  <svg width="33" height="32" viewBox="-1 0 33 32" fill="none">
    <path d="M1.5 6H6V26H24V30H1.5Z" fill="#a5a59c" stroke="#66665f" strokeWidth="1.4" />
    <rect x="6" y="2" width="24.5" height="24" fill="#ececea" stroke="#85857f" strokeWidth="1.6" />
    <rect x="18.5" y="18.5" width="12.5" height="12.5" rx="2" fill="#c8a41c" />
    <path d="M24.7 20.5V29M20.6 24.8H29M21.8 21.8L27.8 27.8M27.8 21.8L21.8 27.8" stroke="#fff8d8" strokeWidth="1.5" />
  </svg>
);

const RemoveIcon = () => (
  <svg width="33" height="32" viewBox="-1 0 33 32" fill="none">
    <rect x="1.5" y="2" width="24.5" height="23.5" fill="#ececea" stroke="#85857f" strokeWidth="1.6" />
    <rect x="18.5" y="20" width="12.5" height="11" rx="2.5" fill="#ee4b4f" />
    <path d="M20.5 25.5H29" stroke="#fff" strokeWidth="2.4" />
  </svg>
);

type MenuEntry = { label: string; icon?: React.ReactNode; arrow?: boolean; active?: boolean } | '-';
const layerMenu: MenuEntry[] = [
  { label: '&Zoom to Layer(s)', icon: <ZoomIcon fill="#dcdcdc" edge="#999" /> },
  { label: 'Zoom to &Selection', icon: <ZoomIcon fill="#fde74c" edge="#c4a50a" /> },
  { label: 'Show in &Overview', icon: <GlassesIcon /> },
  { label: 'Show Feature &Count', icon: <CheckBox w={32} h={30} /> },
  { label: 'Show &Labels', icon: <TagIcon /> },
  { label: 'Copy Layer' },
  { label: 'Re&name Layer' },
  '-',
  { label: '&Duplicate Layer', icon: <DuplicateIcon /> },
  { label: '&Remove Layer...', icon: <RemoveIcon /> },
  '-',
  { label: 'Move to &Top' },
  { label: 'Move to &Bottom' },
  { label: 'Chec&k and All its Parents' },
  '-',
  { label: 'Open &Attribute Table', icon: <TableIcon size={31} /> },
  { label: 'Toggle &Editing', icon: <Pencil size={35} /> },
  { label: '&Filter...' },
  { label: 'C&hange Data Source...' },
  '-',
  { label: 'Set Layer Scale &Visibility...' },
  { label: 'Layer CRS', arrow: true },
  '-',
  { label: 'E&xport', arrow: true, active: true },
  '-',
  { label: 'Styles', arrow: true },
  { label: 'Add Layer Notes...' },
  { label: '&Properties...' },
];

const exportMenu = [
  { label: 'Save Features &As...' },
  { label: 'Save &Selected Features As...', active: true },
  { label: 'Save as Layer &Definition File...' },
  { label: 'Save as &QGIS Layer Style File...' },
];

const legend: [string, string, string, number][] = [
  ['α', 'New permanent', '#a56ddf', 16],
  ['β', 'Lost permanent', '#ff2a2a', 16],
  ['ρ', 'Seasonal', '#5fac7d', 16],
  ['σ', 'Permanent', '#dede1c', 16],
  ['ε', 'Permanent', '#46a9d6', 13],
];

const LayersScene = () => (
  <>
    <LayerPanel>
      <CutRow><CutBox $fill="#fff" $edge="#c8c8c8" /><CutBox $fill="#c98e1f" $edge="#333" /></CutRow>
      <LayerRow $selected>
        <Expander />
        <CheckBox />
        <Badge $pad={6} $w={44}><Swatch $fill="#bfb296" $border="1.5px solid #333" /></Badge>
        <LayerName $tone="selected">transformation_vector</LayerName>
      </LayerRow>
      <LayerRow>
        <Expander><Triangle dir="down" w={17} h={10} /></Expander>
        <CheckBox checked />
        <Badge $pad={11} $w={48}><RasterIcon /></Badge>
        <LayerName $tone="on">transformation</LayerName>
      </LayerRow>
      <LegendText $left={91}>Band 1 (Gray)</LegendText>
      <LegendText $left={127}>0</LegendText>
      {legend.map(([g, t, c, w]) => (
        <LegendRow key={g}>
          <Swatch $fill={c} $border="0" $w={30} />
          <Greek $w={w}>{g}</Greek>
          <LegendName>– {t}</LegendName>
        </LegendRow>
      ))}
      {['Egypt_class_1', 'Egypt_class_2'].map((n) => (
        <LayerRow key={n}>
          <Expander $pad={17}><Triangle dir="right" w={10} h={17} /></Expander>
          <CheckBox />
          <Badge $pad={11} $w={48}><RasterIcon /></Badge>
          <LayerName $tone="off">{n}</LayerName>
        </LayerRow>
      ))}
      <LayerRow>
        <Expander />
        <CheckBox checked />
        <Badge $pad={6} $w={45}><Swatch $fill="#fff" $border="3px solid #ff2a2a" /></Badge>
        <LayerName $tone="on">Egypt</LayerName>
      </LayerRow>
      <LayerRow>
        <Expander />
        <CheckBox />
        <Badge $pad={6} $w={45}><Swatch $fill="#6f9c6f" $border="1.5px solid #333" /></Badge>
        <LayerName $tone="off">WB_countries</LayerName>
      </LayerRow>
      <LayerHScroll>
        <ScrollButton $w={26} $h={29} $edge="right"><Triangle dir="left" w={10} h={17} /></ScrollButton>
        <ScrollThumb $w={224} $h={29} $edge="right" />
        <Push />
        <ScrollButton $w={30} $h={29} $edge="left"><Triangle dir="right" w={10} h={17} /></ScrollButton>
        <ScrollButton $w={15} $h={29} $edge="left" />
      </LayerHScroll>
      <ScrollGutter />
    </LayerPanel>
    <PopupMenu $x={263} $y={17} $w={482} $h={947}>
      {layerMenu.map((m, i) =>
        m === '-' ? <MenuSeparator key={i} /> : (
          <MenuRow key={i} $active={m.active}>
            <MenuIcon>{m.icon}</MenuIcon>
            <span><Mnemonic text={m.label} /></span>
            {m.arrow && <Triangle dir="right" w={10} h={17} fill={m.active ? '#9cc9f0' : '#555'} />}
          </MenuRow>
        ),
      )}
    </PopupMenu>
    <PopupMenu $x={743} $y={792} $w={473} $h={170}>
      {exportMenu.map((m) => (
        <MenuRow key={m.label} $active={m.active} $sub><span><Mnemonic text={m.label} /></span></MenuRow>
      ))}
    </PopupMenu>
  </>
);

/* ---------- save vector layer dialog ---------- */

const FormGrid = styled.div`
  padding: 55px 56px 0 56px;
  display: grid;
  grid-template-columns: 169px 591px;
  grid-template-rows: 45px 50px 52px 53px;
  row-gap: 17px;
  font: 28.4px ${TAHOMA};
`;

const FieldLabel = styled.label`
  padding-top: 4px;
  display: flex;
  align-items: center;
  white-space: nowrap;
`;

const FieldRow = styled.div<{ $gap: number }>`
  display: flex;
  align-items: center;
  gap: ${(p) => p.$gap}px;
`;

const Combo = styled.div<{ $w: number; $h: number }>`
  ${raised}
  flex: none;
  width: ${(p) => p.$w}px;
  height: ${(p) => p.$h}px;
  padding: 3px 19px 0 6px;
  display: flex;
  align-items: center;
  justify-content: space-between;
  white-space: nowrap;
  font: 29px ${TAHOMA};
  svg { margin-top: -5px; }
`;

const PathField = styled.div`
  flex: none;
  width: 519px;
  height: 50px;
  padding: 4px 17px 0 0;
  display: flex;
  align-items: center;
  justify-content: flex-end;
  overflow: hidden;
  background: #fff;
  border: 2px solid #5cb0f2;
  border-radius: 3px;
  font-size: 29px;
  white-space: nowrap;
  svg { margin: -4px 0 0 11px; }
`;

const DisabledField = styled.div`
  border: 1.5px solid #b8b8b8;
  border-radius: 4px;
`;

const OptionsFrame = styled.div`
  flex: none;
  width: 810px;
  height: 417px;
  margin: 41px 0 0 31px;
  display: flex;
  border: 1px solid #bababa;
  overflow: hidden;
  font: 28.5px ${TAHOMA};
`;

const Options = styled.div`
  flex: 1;
  padding: 26px 0 0 26px;
  display: flex;
  flex-direction: column;
  white-space: nowrap;
`;

const OptionRow = styled.div<{ $h: number; $mt?: number; $gap?: number }>`
  flex: none;
  height: ${(p) => p.$h}px;
  margin-top: ${(p) => p.$mt ?? 0}px;
  display: flex;
  align-items: center;
  gap: ${(p) => p.$gap ?? 0}px;
`;

const OptionText = styled.span`
  padding-top: 3px;
`;

const EncodingLabel = styled.span`
  width: 136px;
  padding-top: 2px;
`;

const GroupTitle = styled.strong`
  font-size: 28.4px;
`;

const ArrowSlot = styled.span`
  width: 22px;
  display: flex;
  justify-content: center;
`;

const GroupBox = styled.div`
  flex: none;
  width: 716px;
  height: 160px;
  margin-top: 9px;
  padding: 23px 27px 0;
  background: #ebebeb;
  border: 1px solid #d6d6d6;
`;

const SpacedRow = styled.div`
  height: 54px;
  display: flex;
  align-items: center;
  justify-content: space-between;
`;

const DimRow = styled.div`
  margin-top: 17px;
  display: flex;
  gap: 15px;
  color: #787878;
  line-height: 38px;
`;

const SaveFooter = styled.div`
  margin-top: 18px;
  height: 53px;
  padding: 0 31px 0 107px;
  display: flex;
  align-items: center;
  gap: 17px;
  font: 29px ${TAHOMA};
`;

const FooterText = styled.span`
  margin: 2px auto 0 -2px;
  white-space: nowrap;
`;

const CrsIcon = () => (
  <svg width="46" height="44" viewBox="0 0 46 44" fill="none">
    <circle cx="22" cy="27" r="14.5" fill="#bfe0f7" stroke="#5a86b5" strokeWidth="1.4" />
    <path d="M22 20V42M12 22C12 32 16 38 20 41M32 22C32 32 28 38 24 41M8 31H36" stroke="#5a86b5" strokeWidth="1.3" />
    <path d="M15 2H29L43 20C34 25 10 25 1 20Z" fill="#b9bec4" stroke="#5f666e" strokeWidth="1.4" />
    <path d="M22 2V23M18 2L11 22.5M26 2L33 22.5M11 8H33M6 14C15 17.5 29 17.5 38 14" stroke="#5f666e" strokeWidth="1.2" />
    <rect x="25" y="23" width="20" height="20" rx="3" fill="#c8a41c" />
    <path d="M41 26 L32 37" stroke="#fff" strokeWidth="4" /><polygon points="28,41 29.5,35 34,38.5" fill="#fff" />
  </svg>
);

const ClearIcon = () => (
  <svg width="38" height="28" viewBox="0 0 38 28">
    <path d="M0 14 L11 0H38V28H11Z" fill="#9b9b9b" />
    <path d="M15 6 L29 22 M29 6 L15 22" stroke="#fff" strokeWidth="3.2" />
  </svg>
);

const SaveDialog = () => (
  <Window $x={9} $y={11} $w={876} $h={946} $active>
    <TitleBar $h={77} $size={31.2} $pad="0 32px 0 18px" $gap={9}>
      <QgisLogo size={43} />
      <span>Save Vector Layer as...</span>
      <WindowControls $gap={0}><CloseGlyph size={28} color="#111" /></WindowControls>
    </TitleBar>
    <FormGrid>
      <FieldLabel>Format</FieldLabel>
      <Combo $w={591} $h={45}>ESRI Shapefile<Triangle dir="down" w={22} h={12} /></Combo>
      <FieldLabel>File name</FieldLabel>
      <FieldRow $gap={17}>
        <PathField>1\transformation_vector_water.shp<Caret $h={34} /><ClearIcon /></PathField>
        <Button $w={55} $h={43} $size={28} $drop={2}>...</Button>
      </FieldRow>
      <FieldLabel>Layer name</FieldLabel>
      <DisabledField />
      <FieldLabel>CRS</FieldLabel>
      <FieldRow $gap={8}>
        <Combo $w={527} $h={53}>EPSG:4326 - WGS 84<Triangle dir="down" w={22} h={12} /></Combo>
        <Button $w={56} $h={53}><CrsIcon /></Button>
      </FieldRow>
    </FormGrid>
    <OptionsFrame>
      <Options>
        <OptionRow $h={45}>
          <EncodingLabel>Encoding</EncodingLabel>
          <Combo $w={580} $h={45}>UTF-8<Triangle dir="down" w={22} h={12} /></Combo>
        </OptionRow>
        <OptionRow $h={38} $mt={18} $gap={16}><CheckBox checked w={38} h={38} /><OptionText>Save only selected features</OptionText></OptionRow>
        <OptionRow $h={30} $mt={23} $gap={9}><ArrowSlot><Triangle dir="right" w={10} h={14} fill="#444" /></ArrowSlot><GroupTitle>Select fields to export and their export options</GroupTitle></OptionRow>
        <OptionRow $h={38} $mt={27} $gap={16}><CheckBox checked w={38} h={38} /><OptionText>Persist layer metadata</OptionText></OptionRow>
        <OptionRow $h={30} $mt={24} $gap={9}><ArrowSlot><Triangle dir="down" w={15} h={10} fill="#444" /></ArrowSlot><GroupTitle>Geometry</GroupTitle></OptionRow>
        <GroupBox>
          <SpacedRow><OptionText>Geometry type</OptionText><Combo $w={322} $h={54}>Automatic<Triangle dir="down" w={22} h={12} /></Combo></SpacedRow>
          <DimRow><CheckBox w={39} h={38} />Force multi-type</DimRow>
        </GroupBox>
      </Options>
      <VBar>
        <ScrollButton $w={37} $h={38} $edge="bottom"><Triangle dir="up" w={21} h={12} /></ScrollButton>
        <ScrollThumb $w={38} $h={158} $edge="bottom" />
        <Push />
        <ScrollButton $w={37} $h={38} $edge="top"><Triangle dir="down" w={21} h={12} /></ScrollButton>
      </VBar>
    </OptionsFrame>
    <SaveFooter>
      <CheckBox checked w={38} h={38} />
      <FooterText>Add saved file to map</FooterText>
      <Button $w={112} $h={53} $size={28} $drop={2} $focus>OK</Button>
      <Button $w={112} $h={53} $size={28} $drop={2}>Cancel</Button>
      <Button $w={112} $h={53} $size={28} $drop={2}>Help</Button>
    </SaveFooter>
  </Window>
);

/* ---------- map canvases ---------- */

const Dots = ({ pts }: { pts: [number, number][] }) => (
  <>{pts.map(([x, y], i) => <ellipse key={i} cx={x} cy={y} rx={i % 3 ? 1.5 : 2.3} ry={1.3} fill="#222" />)}</>
);

const TopMap = () => (
  <MapSvg viewBox="11 11 1408 852" fill="none">
    <path d="M1260 8 L1269 36 L1276 60 L1276 70 L1281 80" stroke="#ff2a2a" strokeWidth="6" />
    <path d="M1281 79 L1270 95 L1262 106 L1262 118 L1258 126 L1255 135 L1253 152 L1249 158 L1248 168 L1246 180" stroke="#ff2a2a" strokeWidth="6.5" />
    <path d="M1282 80 L1271 95 L1263 106 L1262 118 L1258 126 L1256 135 L1253 152 L1249 158 L1248 168 L1246 180" stroke="#222" strokeWidth="3.6" />
    <path d="M725 17 l5 -4 M753 19 l4 -3 M758 13 l6 2 M784 12 l4 6 l5 1 M803 12 l4 0 M822 12 l3 1" stroke="#222" strokeWidth="3" />
    <path d="M952 20 L958 14 L964 12 L970 19" stroke="#ff2a2a" strokeWidth="4" />
    <path d="M957 17 L965 12 L971 17" stroke="#222" strokeWidth="4.5" />
    <path d="M313 12 h5 M321 12 h3" stroke="#222" strokeWidth="2" />
    <path d="M11 118 h2 M15 121 l3 -4" stroke="#222" strokeWidth="2.5" />
    <Dots pts={[[454, 613], [455, 616], [471, 611], [470, 626], [487, 639], [495, 639], [529, 643], [479, 640]]} />
    <path d="M472 632 L477 633 L482 637 L478 640 L474 637Z" fill="#222" />
    <path d="M992 862 L1000 859 L1019 859 L1010 864Z" fill="#222" />
    <path d="M1360 863 L1366 859 L1395 859 L1406 863Z" fill="#222" stroke="#ff2a2a" strokeWidth="2" />
  </MapSvg>
);

const LayersMap = () => (
  <MapSvg viewBox="11 901 1220 966" fill="none">
    <path d="M660.5 901V1660H1231" stroke="#ff2a2a" strokeWidth="7" />
    <Dots
      pts={[
        [1081, 942], [1079, 946], [1101, 946], [1082, 957], [1085, 958], [1076, 960], [1091, 956], [1092, 959], [1089, 965], [1061, 968],
        [1069, 968], [1071, 971], [1066, 980], [1076, 980], [1113, 961], [1118, 968], [1108, 972], [1126, 981], [1132, 977], [1165, 958],
        [1170, 957], [1175, 949], [1176, 956], [1036, 1038], [1050, 1044], [1050, 1051], [1200, 1151], [1202, 1153], [1217, 1149], [1217, 1163],
      ]}
    />
    <path d="M1219 1169 L1225 1171 L1229 1174 L1227 1177 L1221 1173Z" fill="#222" />
  </MapSvg>
);

const SaveMap = () => (
  <MapSvg viewBox="1337 901 895 966" fill="none">
    <path d="M2088 899 L2094 916 M2130 899 L2136 908 L2142 916 M2218 1048 L2235 1070 M2218 1121 L2235 1143" stroke="#ff2a2a" strokeWidth="9" />
    <path d="M2090 899 L2096 916 M2132 899 L2138 908 L2144 916 M2218 1050 L2235 1072 M2218 1124 L2235 1146" stroke="#222" strokeWidth="5" />
    <Dots pts={[[1716, 902], [1718, 905], [1704, 911], [1791, 907], [1793, 911], [1813, 903], [1820, 905], [1823, 903], [1852, 909], [1685, 1860]]} />
    <path d="M1845 901 l-4 4 l0 7" stroke="#222" strokeWidth="4" />
    <path d="M2131 1867 L2138 1862 L2142 1857 L2149 1859 L2154 1866Z" fill="#222" />
    <path d="M2156 1860h3M2162 1860h2" stroke="#222" strokeWidth="2" />
  </MapSvg>
);

export default function App() {
  return (
    <Page>
      <GlobalStyle />
      <Panel $w={1428} $h={872}>
        <Scene>
          <TopMap />
          <AttributeTableWindow />
          <ExpressionDialog />
        </Scene>
        <StepNumber $x={326} $y={53} $size={41}>1.</StepNumber>
        <CalloutBox $x={358} $y={68} $w={53} $h={51} />
        <StepNumber $x={586} $y={413} $size={41}>2.</StepNumber>
        <CalloutBox $x={551} $y={348} $w={328} $h={52} />
        <StepNumber $x={983} $y={789} $size={41}>3.</StepNumber>
        <CalloutBox $x={1039} $y={793} $w={265} $h={64} />
      </Panel>
      <LowerRow>
        <Panel $w={1240} $h={986}>
          <Scene>
            <LayersMap />
            <LayersScene />
          </Scene>
          <StepNumber $x={1116} $y={787} $size={53}>4.</StepNumber>
          <StepDot />
        </Panel>
        <Connector>
          <svg width="92" height="30" viewBox="0 0 92 30"><path d="M0 10.5H65V0L92 15L65 30V20.5H0Z" fill={RED} /></svg>
        </Connector>
        <Panel $w={915} $h={986}>
          <Scene>
            <SaveMap />
            <SaveDialog />
          </Scene>
          <StepNumber $x={669} $y={141} $size={53}>5.</StepNumber>
          <CalloutBox $x={224} $y={194} $w={611} $h={73} />
          <StepNumber $x={421} $y={817} $size={53}>6.</StepNumber>
          <CalloutBox $x={464} $y={853} $w={156} $h={94} />
        </Panel>
      </LowerRow>
    </Page>
  );
}
